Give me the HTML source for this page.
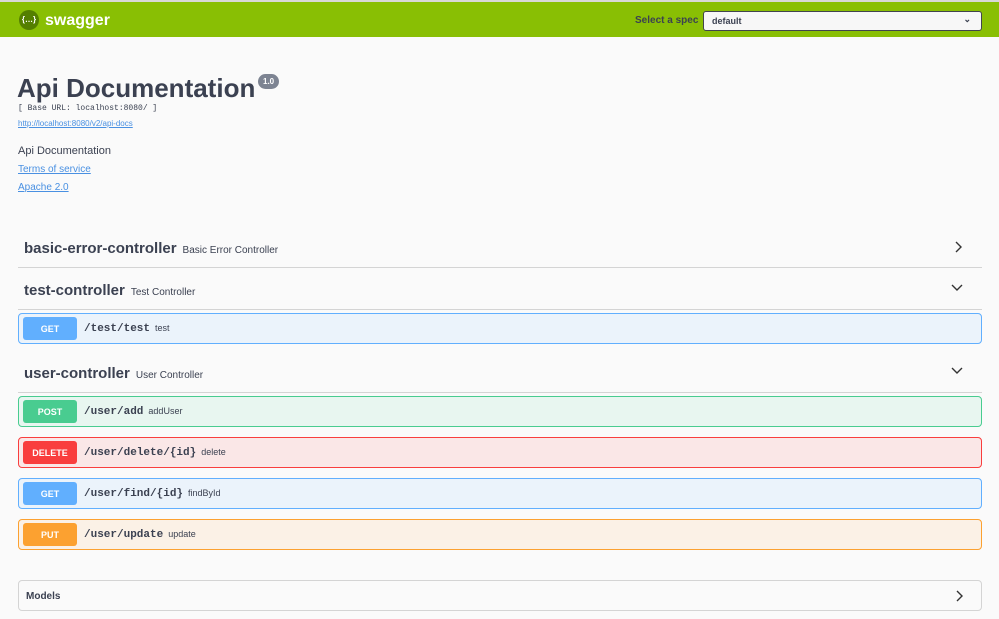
<!DOCTYPE html>
<html><head><meta charset="utf-8"><style>
*{margin:0;padding:0;box-sizing:border-box}
body{width:999px;height:619px;overflow:hidden;background:#fafafa;font-family:"Liberation Sans",sans-serif;color:#3b4151;position:relative}
.top{position:absolute;left:0;top:0;width:999px;height:37px;background:#89bf04;border-top:2px solid #d8d8d8}
.logo{position:absolute;left:19px;top:8px;width:20px;height:20px;border-radius:50%;background:#547f00;color:#fff;font-size:8px;font-weight:bold;text-align:center;line-height:20px}
.brand{position:absolute;left:45px;top:10px;color:#fff;font-weight:bold;font-size:16px}
.spec{position:absolute;left:635px;top:13px;font-size:10px;font-weight:bold;color:#3b4151}
.sel{position:absolute;left:703px;top:9px;width:279px;height:20px;background:#f7f7f7;border:1px solid #41444e;border-radius:3px;font-size:9px;font-weight:bold;padding:4px 8px}
.sel span{position:absolute;right:10px;top:2px;font-size:9px}
.a{position:absolute}
h1{position:absolute;left:17px;top:73px;font-size:26px;font-weight:bold;color:#3b4151}
.ver{position:absolute;left:258px;top:74px;background:#7d8492;color:#fff;border-radius:8px;font-size:8px;font-weight:bold;padding:3px 5px}
.mono{font-family:"Liberation Mono",monospace}
.lnk{color:#4990e2;text-decoration:underline}
.tag{position:absolute;left:18px;width:964px;border-bottom:1px solid #d4d4d4;height:42px}
.tag b{position:absolute;left:6px;top:14px;font-size:15px}
.tag small{font-size:10px;color:#3b4151;font-weight:normal;margin-left:6px}
.chev{position:absolute;right:18px;top:14px}
.op{position:absolute;left:18px;width:964px;height:31px;border:1px solid;border-radius:4px}
.m{position:absolute;left:4px;top:3px;width:54px;height:23px;border-radius:3px;color:#fff;font-size:9px;font-weight:bold;text-align:center;line-height:24px}
.p{position:absolute;left:65px;top:9px;font-family:"Liberation Mono",monospace;font-size:11px;font-weight:bold;color:#3b4151}
.p small{font-family:"Liberation Sans",sans-serif;font-size:9px;font-weight:normal;margin-left:5px}
.get{background:#ebf3fb;border-color:#61affe}.get .m{background:#61affe}
.post{background:#e8f6f0;border-color:#49cc90}.post .m{background:#49cc90}
.del{background:#fae7e7;border-color:#f93e3e}.del .m{background:#f93e3e}
.put{background:#fbf1e6;border-color:#fca130}.put .m{background:#fca130}
.models{position:absolute;left:18px;top:580px;width:964px;height:31px;border:1px solid #d4d4d4;border-radius:4px;font-size:10px;font-weight:bold;padding:10px 7px}
</style></head><body>
<div class="top"><div class="logo">{…}</div><div class="brand">swagger</div>
<div class="spec">Select a spec</div><div class="sel">default<span>⌄</span></div></div>
<h1>Api Documentation</h1><div class="ver">1.0</div>
<div class="a mono" style="left:18px;top:104px;font-size:8px;color:#3b4151">[ Base URL: localhost:8080/ ]</div>
<div class="a lnk" style="left:18px;top:119px;font-size:8px">http://localhost:8080/v2/api-docs</div>
<div class="a" style="left:18px;top:145px;font-size:11px">Api Documentation</div>
<div class="a lnk" style="left:18px;top:164px;font-size:10px">Terms of service</div>
<div class="a lnk" style="left:18px;top:182px;font-size:10px">Apache 2.0</div>

<div class="tag" style="top:226px"><b>basic-error-controller<small>Basic Error Controller</small></b>
<svg class="chev" width="12" height="14" viewBox="0 0 12 14"><path d="M4 2l5 5-5 5" fill="none" stroke="#333" stroke-width="1.4"/></svg></div>
<div class="tag" style="top:268px"><b>test-controller<small>Test Controller</small></b>
<svg class="chev" width="14" height="12" viewBox="0 0 14 12"><path d="M2 3l5 5 5-5" fill="none" stroke="#333" stroke-width="1.4"/></svg></div>
<div class="op get" style="top:313px"><div class="m">GET</div><div class="p">/test/test<small>test</small></div></div>
<div class="tag" style="top:351px"><b>user-controller<small>User Controller</small></b>
<svg class="chev" width="14" height="12" viewBox="0 0 14 12"><path d="M2 3l5 5 5-5" fill="none" stroke="#333" stroke-width="1.4"/></svg></div>
<div class="op post" style="top:396px"><div class="m">POST</div><div class="p">/user/add<small>addUser</small></div></div>
<div class="op del" style="top:437px"><div class="m">DELETE</div><div class="p">/user/delete/{id}<small>delete</small></div></div>
<div class="op get" style="top:478px"><div class="m">GET</div><div class="p">/user/find/{id}<small>findById</small></div></div>
<div class="op put" style="top:519px"><div class="m">PUT</div><div class="p">/user/update<small>update</small></div></div>
<div class="models">Models
<svg style="position:absolute;right:16px;top:8px" width="12" height="14" viewBox="0 0 12 14"><path d="M4 2l5 5-5 5" fill="none" stroke="#333" stroke-width="1.4"/></svg></div>
</body></html>
